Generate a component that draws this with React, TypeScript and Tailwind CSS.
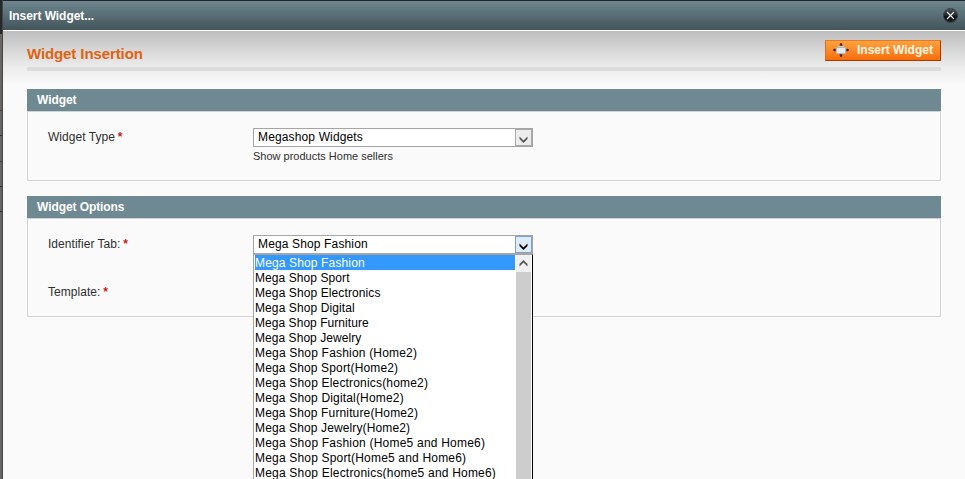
import React from 'react';

const options = [
  { label: 'Mega Shop Fashion', tracking: 'tracking-[0.14px]' },
  { label: 'Mega Shop Sport', tracking: 'tracking-[0.08px]' },
  { label: 'Mega Shop Electronics', tracking: 'tracking-[0.1px]' },
  { label: 'Mega Shop Digital', tracking: 'tracking-[0.1px]' },
  { label: 'Mega Shop Furniture', tracking: 'tracking-[0.05px]' },
  { label: 'Mega Shop Jewelry', tracking: 'tracking-[0.05px]' },
  { label: 'Mega Shop Fashion (Home2)', tracking: 'tracking-[0.19px]' },
  { label: 'Mega Shop Sport(Home2)', tracking: 'tracking-[0.14px]' },
  { label: 'Mega Shop Electronics(home2)', tracking: 'tracking-[0.18px]' },
  { label: 'Mega Shop Digital(Home2)', tracking: 'tracking-[0.17px]' },
  { label: 'Mega Shop Furniture(Home2)', tracking: 'tracking-[0.14px]' },
  { label: 'Mega Shop Jewelry(Home2)', tracking: 'tracking-[0.13px]' },
  { label: 'Mega Shop Fashion (Home5 and Home6)', tracking: 'tracking-[0.21px]' },
  { label: 'Mega Shop Sport(Home5 and Home6)', tracking: 'tracking-[0.18px]' },
  { label: 'Mega Shop Electronics(home5 and Home6)', tracking: 'tracking-[0.2px]' },
];

function Chevron({ up = false, color }: { up?: boolean; color: string }) {
  return (
    <svg width="9" height="7" viewBox="0 0 9 7" className={up ? 'rotate-180' : ''}>
      <path d="M0.500 0.500 L4.500 4.500 L8.500 0.500 V3 L4.500 7 L0.500 3 Z" fill={color} />
    </svg>
  );
}

function Select({ value, active = false }: { value: string; active?: boolean }) {
  return (
    <div className="flex h-[19px] w-[280px] border border-[#a5a5a5] bg-white">
      <div className="flex-1 pl-1 text-[12px] leading-[17px] tracking-[0.14px] text-black">{value}</div>
      <div
        className={
          'flex h-[17px] w-[17px] items-center justify-center border pt-[3px] ' +
          (active ? 'border-[#7da2ce] bg-[#ddebfa]' : 'border-[#a9a9a9] bg-[#ececec]')
        }
      >
        <Chevron color={active ? '#000' : '#555'} />
      </div>
    </div>
  );
}

function SectionHead({ children }: { children: React.ReactNode }) {
  return (
    <h3 className="h-[22px] bg-[#6f8992] pl-[10px] text-[12px] leading-[22px] font-bold tracking-[-0.08px] text-white">
      {children}
    </h3>
  );
}

function Label({ children }: { children: React.ReactNode }) {
  return (
    <div className="w-[205px] text-[12px] leading-[18px] tracking-[0.04px] text-[#2f2f2f]">
      {children} <span className="-ml-[0.5px] font-bold text-[#c81a1a]">*</span>
    </div>
  );
}

export default function App() {
  return (
    <div className="flex h-[479px] w-[965px] overflow-hidden bg-[#fafafa] font-['Liberation_Sans',Arial,sans-serif]">
      <div className="flex w-[3px] shrink-0 flex-col border-r border-[#444] bg-[#666]">
        <div className="h-[34px] bg-[#26292b]" />
        <div className="h-[77px] border-b border-[#444] bg-[#696664]" />
        <div className="h-[25px] border-b border-[#333]" />
        <div className="h-[26px] border-b border-[#444]" />
        <div className="h-[25px] border-b border-[#333]" />
        <div className="h-[25px] border-b border-[#333]" />
      </div>

      <div className="flex min-w-0 flex-1 flex-col">
        <header className="flex h-[30px] shrink-0 items-center justify-between border-t border-[#22262b] bg-linear-to-b from-[#6f878f] to-[#42545a] pr-[7px] pl-[6px]">
          <span className="text-[12px] leading-[28px] font-bold tracking-[-0.05px] text-white">Insert Widget...</span>
          <svg width="15" height="15" viewBox="0 0 15 15">
            <defs>
              <linearGradient id="close" x1="0" y1="0" x2="0" y2="1">
                <stop offset="0" stopColor="#4c5558" />
                <stop offset="0.5" stopColor="#20272a" />
                <stop offset="0.55" stopColor="#090d0f" />
                <stop offset="1" stopColor="#1c2427" />
              </linearGradient>
            </defs>
            <circle cx="7.5" cy="7.5" r="7" fill="url(#close)" stroke="#3a4548" />
            <path d="M4 4 L11 11 M11 4 L4 11" stroke="#f3f3f3" strokeWidth="1.1" />
          </svg>
        </header>

        <main className="flex-1 border-t border-white bg-[linear-gradient(to_bottom,#bebebe_0px,#ececec_36px,#fafafa_54px)] pr-6 pl-6">
          <div className="flex h-[40px] items-start justify-between border-b-4 border-[#dddddd] pt-[8px]">
            <h1 className="pt-[4px] text-[15px] leading-[22px] font-bold tracking-[-0.1px] text-[#e2620f]">
              Widget Insertion
            </h1>
            <button className="mt-[1px] flex h-[21px] w-[116px] items-center border border-t-[#e8772a] border-r-[#a33c00] border-b-[#a33c00] border-l-[#e0691a] bg-linear-to-b from-[#ffa23c] to-[#f76d05] pl-[7px] text-[12px] font-bold text-[#fff6e6]">
              <svg width="16" height="14" viewBox="0 0 16 14" className="mr-[8px] -mt-px">
                <path d="M8 0v14M0 7h16" stroke="#302014" />
                <path
                  d="M8 0l1.800 2.200H6.200zM8 14l1.800-2.200H6.200zM0 7l2.200-1.800v3.600zM16 7l-2.200-1.800v3.600z"
                  fill="#302014"
                />
                <path d="M5 3h6v2H5z" fill="#c3c7ca" />
                <rect x="3.500" y="4.500" width="9" height="6" rx="0.500" fill="#e6e9eb" stroke="#b9b4ae" />
              </svg>
              <span className="-mt-[2px] whitespace-nowrap">Insert Widget</span>
            </button>
          </div>

          <section className="mt-[18px]">
            <SectionHead>Widget</SectionHead>
            <div className="h-[70px] border border-[#d3d3d3] bg-[#fafafa] pt-[16px] pl-[20px]">
              <div className="flex">
                <Label>Widget Type</Label>
                <div>
                  <Select value="Megashop Widgets" />
                  <p className="pt-[3px] text-[11px] leading-[13px] text-[#2f2f2f]">
                    Show products Home sellers
                  </p>
                </div>
              </div>
            </div>
          </section>

          <section className="mt-[15px]">
            <SectionHead>Widget Options</SectionHead>
            <div className="h-[99px] border border-[#d3d3d3] bg-[#fafafa] pt-[16px] pl-[20px]">
              <div className="flex h-[48px]">
                <Label>Identifier Tab:</Label>
                <div className="relative">
                  <Select value="Mega Shop Fashion" active />
                  <div className="absolute top-[19px] left-0 z-10 flex h-[240px] w-[280px] border-t border-r border-l border-t-[#a5a5a5] border-r-black border-l-[#a5a5a5] bg-white pl-px">
                    <ul className="w-[260px]">
                      {options.map(({ label, tracking }, i) => (
                        <li
                          key={label}
                          className={
                            'h-[15px] text-[12px] leading-[16px] whitespace-nowrap ' +
                            tracking +
                            (i === 0 ? ' bg-[#3399ff] text-white' : ' text-black')
                          }
                        >
                          {label}
                        </li>
                      ))}
                    </ul>
                    <div className="ml-px flex w-[15px] flex-col bg-[#cdcdcd]">
                      <div className="flex h-[17px] items-center justify-center bg-[#f0f0f0]">
                        <Chevron up color="#555" />
                      </div>
                    </div>
                  </div>
                </div>
              </div>
              <Label>Template:</Label>
            </div>
          </section>
        </main>
      </div>
    </div>
  );
}
